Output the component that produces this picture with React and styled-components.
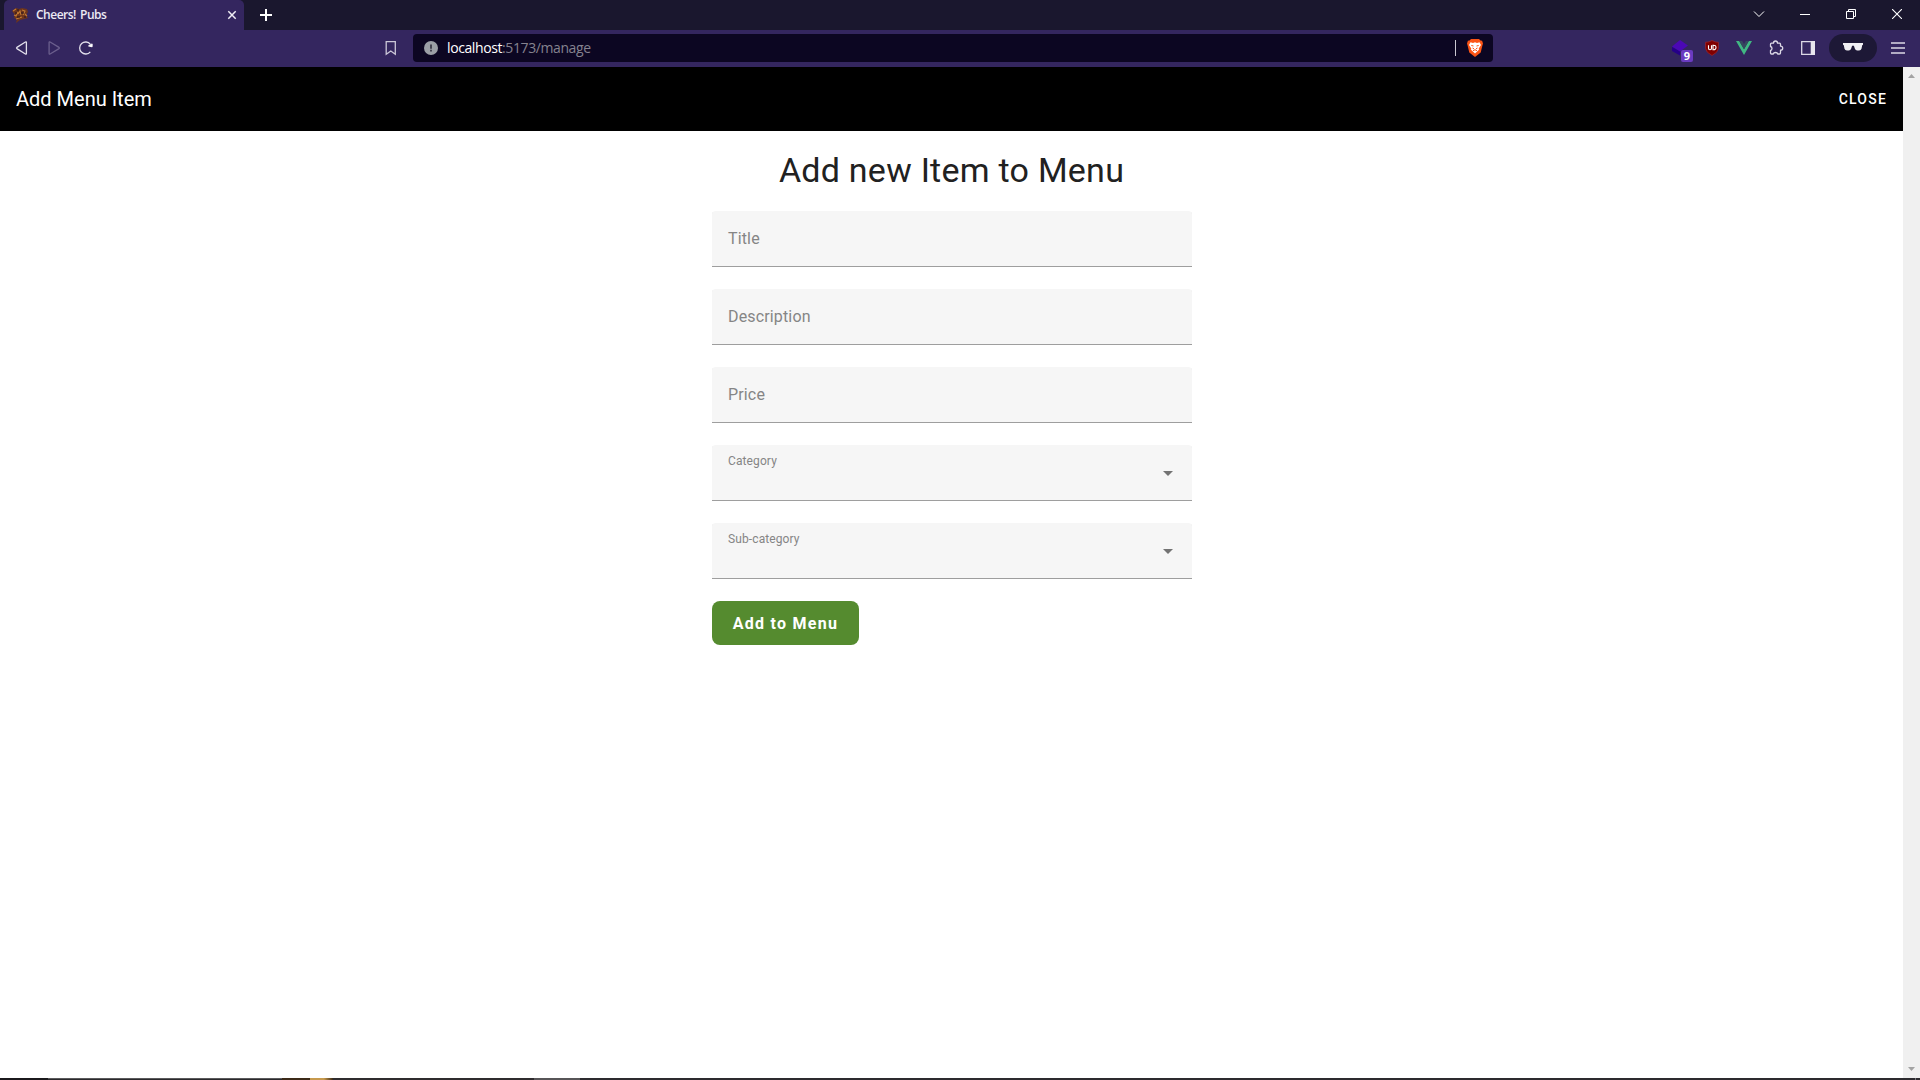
import React from "react";
import styled, { createGlobalStyle } from "styled-components";

const uiFont = `"Open Sans", "Noto Sans", sans-serif`;
const appFont = `Roboto, "Liberation Sans", sans-serif`;

const GlobalStyle = createGlobalStyle`
  *, *::before, *::after { box-sizing: border-box; }
  body { margin: 0; overflow: hidden; background: #fff; }
`;

const Window = styled.div`
  display: flex;
  flex-direction: column;
  width: 1920px;
  height: 1080px;
  overflow: hidden;
  font-family: ${appFont};
`;

const TabStrip = styled.div`
  display: flex;
  align-items: stretch;
  height: 30px;
  flex: none;
  padding-left: 4px;
  background: #1a172e;
`;

const Tab = styled.div`
  display: flex;
  align-items: center;
  width: 240px;
  padding: 0 7px 0 8px;
  background: #34265f;
  border-radius: 5px 5px 0 0;
`;

const TabTitle = styled.span`
  flex: 1;
  margin-left: 7px;
  color: #ece9f4;
  font: 600 12px/30px ${uiFont};
  letter-spacing: -0.5px;
  word-spacing: 1.5px;
  white-space: nowrap;
`;

const NewTab = styled.div`
  display: flex;
  align-items: center;
  margin-left: 15px;
`;

const WindowControls = styled.div`
  display: flex;
  align-items: center;
  margin-left: auto;
  height: 28px;
`;

const Control = styled.div`
  display: flex;
  align-items: center;
  justify-content: center;
  width: 46px;
`;

const Toolbar = styled.div`
  display: flex;
  align-items: center;
  height: 37px;
  flex: none;
  padding-bottom: 1px;
  background: #34265f;
`;

const NavButtons = styled.div`
  display: flex;
  align-items: center;
  gap: 16px;
  width: 383px;
  padding-left: 14px;
`;

const Bookmark = styled.div`
  display: flex;
  width: 30px;
`;

const AddressBar = styled.div`
  display: flex;
  align-items: center;
  width: 1080px;
  height: 28px;
  padding: 0 10px 0 11px;
  border-radius: 4px;
  background: #0c0622;
`;

const Url = styled.span`
  flex: 1;
  margin-left: 9px;
  color: #85828f;
  font: 400 14px/28px ${uiFont};
  letter-spacing: -0.4px;

  b { color: #fff; font-weight: 400; }
`;

const Divider = styled.i`
  width: 1px;
  height: 16px;
  margin-right: 11px;
  background: #c9c7d0;
`;

const Extensions = styled.div`
  display: flex;
  align-items: center;
  margin-left: auto;
  padding-right: 15px;
`;

const Slot = styled.div`
  display: flex;
  align-items: center;
  justify-content: center;
  width: 32px;
  position: relative;
`;

const CountBadge = styled.span`
  position: absolute;
  left: 17px;
  top: 11px;
  width: 12px;
  height: 12px;
  border-radius: 2px;
  background: #6a3bc0;
  color: #fff;
  font: 700 11px/12px ${uiFont};
  text-align: center;
`;

const PrivatePill = styled.div`
  display: flex;
  align-items: center;
  justify-content: center;
  width: 48px;
  height: 28px;
  margin: 0 14px 0 5px;
  padding-bottom: 2px;
  border-radius: 14px;
  background: #1d1836;
`;

const Viewport = styled.div`
  display: flex;
  height: 1011px;
  flex: none;
`;

const Page = styled.main`
  width: 1903px;
  background: #fff;
`;

const Scrollbar = styled.div`
  display: flex;
  flex-direction: column;
  align-items: center;
  justify-content: space-between;
  width: 17px;
  padding: 7px 0;
  background: #f0f0f0;
`;

const AppBar = styled.header`
  display: flex;
  align-items: center;
  justify-content: space-between;
  height: 64px;
  padding: 0 16px;
  background: #000;
  color: #fff;
`;

const AppTitle = styled.div`
  font-size: 20px;
  line-height: 30px;
`;

const CloseButton = styled.button`
  padding: 0;
  border: 0;
  background: none;
  color: #fff;
  font: 500 14px/36px ${appFont};
  letter-spacing: 1.2px;
`;

const Form = styled.form`
  display: flex;
  flex-direction: column;
  width: 480px;
  margin: 0 auto 0 712px;
  padding-top: 16px;
`;

const Heading = styled.h1`
  margin: 0 1px 16px 0;
  height: 48px;
  color: #212121;
  font: 400 34px/47px ${appFont};
  letter-spacing: 0.25px;
  text-align: center;
  white-space: nowrap;
`;

const Field = styled.div`
  display: flex;
  align-items: ${(p) => (p.$floating ? "flex-start" : "center")};
  justify-content: space-between;
  height: 56px;
  margin-bottom: 22px;
  padding: 0 16px;
  border-radius: 4px 4px 0 0;
  background: #f6f6f6;
  box-shadow: inset 0 -1px #9e9e9e;
`;

const Label = styled.label`
  color: #858585;
  font-size: ${(p) => (p.$floating ? 12 : 16)}px;
  line-height: ${(p) => (p.$floating ? 16 : 24)}px;
  letter-spacing: ${(p) => (p.$floating ? 0.11 : 0.15)}px;
  padding-top: ${(p) => (p.$floating ? 8 : 0)}px;
`;

const Caret = styled.i`
  width: 0;
  height: 0;
  margin: 26px 3px 0 0;
  border: 5px solid transparent;
  border-top-color: #737373;
  border-bottom: 0;
`;

const Submit = styled.button`
  width: 147px;
  height: 44px;
  padding: 1px 0 0;
  border: 0;
  border-radius: 8px;
  background: #558b2f;
  color: #fff;
  font: 700 16px/44px ${appFont};
  letter-spacing: 1.25px;
`;

const Taskbar = styled.div`
  display: flex;
  height: 2px;
  flex: none;
  background: #2d2b2f;
`;

const TaskSegment = styled.div`
  width: ${(p) => p.$w}px;
  background: ${(p) => p.$bg};
`;

const Favicon = () => (
  <svg width="17" height="17" viewBox="0 0 17 17">
    <path d="M0 4l4-3 3 1 3-1 5 1 1 3-2 3 2 3-4 1-4 1-4 3 1-4-3-1 1-3z" fill="#6e351c" />
    <path d="M1 4l3-2M2 8l2 1 2-4M6 7l2-3 1 4M10 3l3 1-2 4M13 7l2 2M4 12l6-2" stroke="#c27a32" strokeWidth="1.1" fill="none" />
    <path d="M5 3h2M9 6h3M3 6h2M5 10h3M12 10h2" stroke="#27151e" />
  </svg>
);

const Arrow = ({ forward }) => (
  <svg width="16" height="16" viewBox="0 0 16 16">
    <path
      d={forward ? "M3.1 2.5v11q0 1 1 .5L13 8.600q.8-.6 0-1.200L4.100 2q-1-.5-1 .5z" : "M12.4 2.5v11q0 1-1 .5L2.9 8.600q-.8-.6 0-1.200L11.400 2q1-.5 1 .5z"}
      fill="none"
      stroke={forward ? "#6b5f8d" : "#e2dfeb"}
      strokeWidth="1.3"
    />
  </svg>
);

const fields = ["Title", "Description", "Price"];
const selects = ["Category", "Sub-category"];

export default function App() {
  return (
    <Window>
      <GlobalStyle />
      <TabStrip>
        <Tab>
          <Favicon />
          <TabTitle>Cheers! Pubs</TabTitle>
          <svg width="10" height="10" viewBox="0 0 10 10"><path d="M1.3 1.3l7.4 7.4M8.7 1.3L1.3 8.7" stroke="#f0eef5" strokeWidth="1.5" /></svg>
        </Tab>
        <NewTab>
          <svg width="14" height="14" viewBox="0 0 14 14"><path d="M7 1v12M1 7h12" stroke="#fff" strokeWidth="2" /></svg>
        </NewTab>
        <WindowControls>
          <Control><svg width="12" height="8" viewBox="0 0 12 8"><path d="M1 1.5l5 5 5-5" fill="none" stroke="#fff" strokeWidth="1" /></svg></Control>
          <Control><svg width="10" height="2"><path d="M0 1h10" stroke="#fff" strokeWidth="1" shapeRendering="crispEdges" /></svg></Control>
          <Control><svg width="10" height="10" viewBox="0 0 10 10"><path d="M.5 2.5h7v7h-7zM2.5 2V.5h7v7H8" fill="none" stroke="#fff" /></svg></Control>
          <Control><svg width="10" height="10" viewBox="0 0 10 10"><path d="M0 0l10 10M10 0L0 10" stroke="#fff" strokeWidth="1.1" /></svg></Control>
        </WindowControls>
      </TabStrip>

      <Toolbar>
        <NavButtons>
          <Arrow />
          <Arrow forward />
          <svg width="16" height="16" viewBox="0 0 16 16">
            <path d="M12.300 11.800A6 6 0 1 1 12.400 4.300" fill="none" stroke="#e2dfeb" strokeWidth="1.3" />
            <path d="M10.500 5.900l3.600-2v2.900z" fill="#fff" stroke="#fff" />
          </svg>
        </NavButtons>
        <Bookmark>
          <svg width="16" height="16" viewBox="0 0 16 16"><path d="M3.200 1.700h9.100v12.600L7.800 11l-4.600 3.300z" fill="none" stroke="#cbc7d8" strokeWidth="1.300" /></svg>
        </Bookmark>
        <AddressBar>
          <svg width="14" height="14" viewBox="0 0 14 14">
            <circle cx="7" cy="7" r="7" fill="#9b9fa6" />
            <path d="M7 3.500v4.200M7 8.700v1.800" stroke="#3a3947" strokeWidth="1.800" />
          </svg>
          <Url><b>localhost</b>:5173/manage</Url>
          <Divider />
          <svg width="16" height="18" viewBox="0 0 16 18">
            <path d="M4 0h8l1.500 1.600 1.600.2.900 2.700-.6 2-1.700 7L8 18l-5.700-4.500-1.700-7L0 4.500l.9-2.700 1.600-.2z" fill="#fb5415" />
            <path d="M3.500 3.300L6 3.900l2-.6 2 .6 2.500-.6L14 6l-2.300 3.500.3 1.300L8 14.500l-4-3.700.3-1.300L2 6z" fill="#fff" />
            <path d="M4.300 6.500l2.200.5M11.700 6.500L9.500 7M6 11.700l2-1 2 1M5.500 9l1.500.7M10.500 9L9 9.700" fill="none" stroke="#fb5415" strokeWidth="1" />
          </svg>
        </AddressBar>
        <Extensions>
          <Slot>
            <svg width="18" height="18" viewBox="0 0 18 18"><path d="M1 8l8 4v4.500L1 12z" fill="#250088" /><path d="M9 1l8 5.500-8 6-8-5z" fill="#4b08b5" /></svg>
            <CountBadge>9</CountBadge>
          </Slot>
          <Slot>
            <svg width="16" height="16" viewBox="0 0 16 16">
              <path d="M8 .5q3 1.800 6.500 1.800v6Q14 12.500 8 15.500 2 12.500 1.500 8.300v-6Q5 2.300 8 .5z" fill="#800000" stroke="#9b2831" strokeWidth=".7" />
              <path d="M4.500 5.200v3q0 1.500 1.500 1.500T7.500 8.200v-3M9 5.200v4.500q3 .3 3-2.200T9 5.200z" fill="none" stroke="#fff" strokeWidth="1.100" />
            </svg>
          </Slot>
          <Slot>
            <svg width="16" height="14" viewBox="0 0 16 14"><path d="M0 0h3.200L8 8.300 12.800 0H16L8 14z" fill="#41b883" /><path d="M3.200 0h3L8 3.200 9.800 0h3L8 8.300z" fill="#35495e" /></svg>
          </Slot>
          <Slot>
            <svg width="16" height="16" viewBox="0 0 16 16"><path d="M3.500 3.200h2q0-2.200 2-2.200t2 2.200h2q1 0 1 1v2q2.200 0 2.200 2t-2.200 2v2.800q0 1-1 1H9.700q-.2-1.500-2.200-1.500T5.300 14H3.500q-1 0-1-1v-2.500q1.500-.3 1.500-2T2.500 6.500V4.200q0-1 1-1z" fill="none" stroke="#dcd9e6" strokeWidth="1.300" strokeLinejoin="round" /></svg>
          </Slot>
          <Slot>
            <svg width="14" height="14" viewBox="0 0 14 14"><path d="M.7.700h12.600v12.600H.700z" fill="none" stroke="#dcd9e6" strokeWidth="1.300" /><path d="M9.700 0H14v14H9.700z" fill="#e8e6ee" /></svg>
          </Slot>
          <PrivatePill>
            <svg width="20" height="8" viewBox="0 0 20 8"><path d="M0 0h20v1.700l-.8.5-.7 3.500Q18 7.500 16 7.500h-1.800q-1.700 0-2.300-1.800l-1-3H9.100l-1 3Q7.500 7.500 5.800 7.500H4Q2 7.500 1.500 5.700L.8 2.200 0 1.700z" fill="#f1f0f4" /></svg>
          </PrivatePill>
          <svg width="14" height="12" viewBox="0 0 14 12"><path d="M0 1h14M0 6h14M0 11h14" stroke="#dcd9e6" strokeWidth="1.300" /></svg>
        </Extensions>
      </Toolbar>

      <Viewport>
        <Page>
          <AppBar>
            <AppTitle>Add Menu Item</AppTitle>
            <CloseButton>CLOSE</CloseButton>
          </AppBar>
          <Form>
            <Heading>Add new Item to Menu</Heading>
            {fields.map((name) => (
              <Field key={name}><Label>{name}</Label></Field>
            ))}
            {selects.map((name) => (
              <Field key={name} $floating><Label $floating>{name}</Label><Caret /></Field>
            ))}
            <Submit type="button">Add to Menu</Submit>
          </Form>
        </Page>
        <Scrollbar>
          <svg width="7" height="4"><path d="M0 4L3.500 0 7 4z" fill="#a3a3a3" /></svg>
          <svg width="7" height="4"><path d="M0 0l3.500 4L7 0z" fill="#a3a3a3" /></svg>
        </Scrollbar>
      </Viewport>

      <Taskbar>
        <TaskSegment $w={48} $bg="#1b191c" />
        <TaskSegment $w={234} $bg="linear-gradient(#5b5a5c 50%, #2b292c 50%)" />
        <TaskSegment $w={28} $bg="#3c2a18" />
        <TaskSegment $w={23} $bg="linear-gradient(90deg, #c79a4e 60%, #3c2a18)" />
        <TaskSegment $w={201} $bg="#2f2c2e" />
        <TaskSegment $w={46} $bg="#575557" />
        <TaskSegment $w={1335} $bg="#2d2b2f" />
        <TaskSegment $w={1} $bg="#77757a" />
      </Taskbar>
    </Window>
  );
}
